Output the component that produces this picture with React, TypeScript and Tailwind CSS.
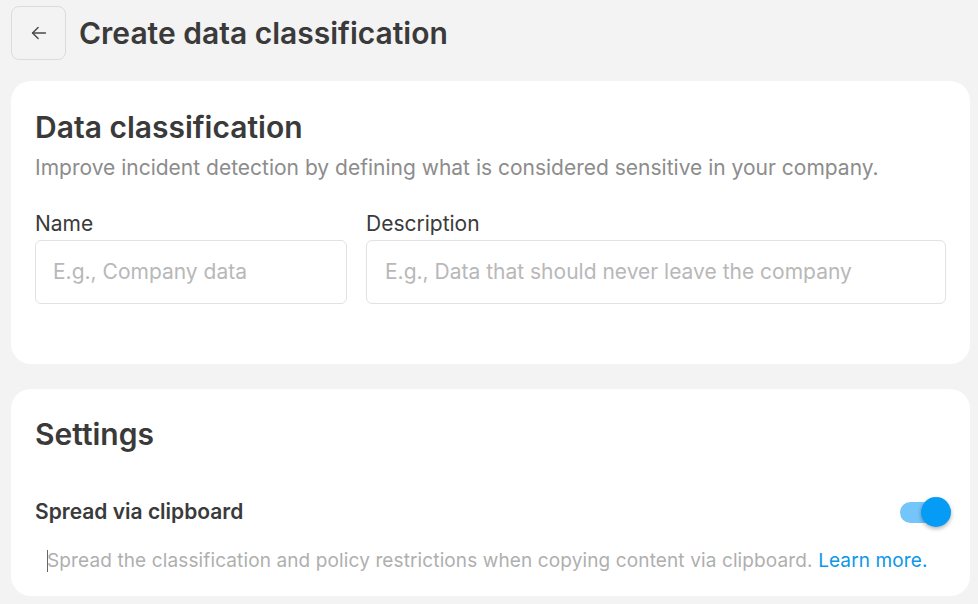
import { useState } from "react"

const font = { fontFamily: "Inter, 'Noto Sans', sans-serif" }

function BackButton() {
  return (
    <button className="flex h-[54px] w-[55px] shrink-0 items-center justify-center rounded-[8px] border border-[#dcdcdc] bg-[#f3f3f3]">
      <svg width="22" height="22" viewBox="0 0 24 24" fill="none" stroke="#4a4a4a" strokeWidth="1.6" strokeLinecap="round" strokeLinejoin="round">
        <path d="M19 12H5" />
        <path d="M11 6l-6 6 6 6" />
      </svg>
    </button>
  )
}

function Toggle() {
  const [on, setOn] = useState(true)
  return (
    <button onClick={() => setOn(!on)} className="relative mr-[4px] h-[24px] w-[42px]">
      <span className={`absolute left-0 top-[2px] h-[21px] w-[40px] rounded-full ${on ? "bg-[#74c6fa]" : "bg-[#d4d4d4]"}`} />
      <span
        className={`absolute top-[-3px] h-[30px] w-[30px] rounded-full shadow-[0_2px_4px_rgba(0,0,0,0.3)] ${on ? "left-[21px] bg-[#069cf5]" : "left-[-6px] bg-white"}`}
      />
    </button>
  )
}

export default function App() {
  return (
    <div className="min-h-[604px] w-full bg-[#f3f3f3] pb-[8px] text-[#3a3a3a]" style={font}>
      <div className="flex items-center gap-[13px] px-[11px] pt-[6px]">
        <BackButton />
        <h1 className="text-[30px] font-semibold leading-[36px] text-[#3a3a3a]">Create data classification</h1>
      </div>

      <div className="ml-[11px] mr-[8px] mt-[21px] rounded-[20px] bg-white px-[24px] pb-[60px] pt-[28px]">
        <h2 className="text-[30px] font-semibold leading-[36px]">Data classification</h2>
        <p className="mt-[9px] text-[21px] leading-[28px] text-[#8c8c8c]">
          Improve incident detection by defining what is considered sensitive in your company.
        </p>

        <div className="mt-[28px] flex gap-[19px]">
          <div className="flex w-[312px] flex-col">
            <label className="text-[21px] leading-[28px] text-[#3a3a3a]">Name</label>
            <div className="mt-[2px] flex h-[64px] items-center rounded-[6px] border border-[#e2e2e2] px-[17px] text-[21px] text-[#b8b8b8]">
              E.g., Company data
            </div>
          </div>
          <div className="flex flex-1 flex-col">
            <label className="text-[21px] leading-[28px] text-[#3a3a3a]">Description</label>
            <div className="mt-[2px] flex h-[64px] items-center rounded-[6px] border border-[#e2e2e2] px-[18px] text-[21px] text-[#b8b8b8]">
              E.g., Data that should never leave the company
            </div>
          </div>
        </div>
      </div>

      <div className="ml-[11px] mr-[8px] mt-[25px] rounded-[20px] bg-white px-[24px] pb-[22px] pt-[27px]">
        <h2 className="text-[30px] font-semibold leading-[36px]">Settings</h2>

        <div className="mt-[46px] flex h-[28px] items-center justify-between">
          <span className="text-[21px] font-semibold leading-[28px]">Spread via clipboard</span>
          <Toggle />
        </div>

        <p className="mt-[22px] flex h-[26px] items-center pl-[12px] text-[19px] leading-[26px] tracking-[0.12px] text-[#afafaf]">
          <span className="mr-[-1px] inline-block h-[22px] w-[1px] bg-[#666]" />
          <span>
            Spread the classification and policy restrictions when copying content via clipboard.{" "}
            <a className="text-[#0a97e8]">Learn more.</a>
          </span>
        </p>
      </div>
    </div>
  )
}
